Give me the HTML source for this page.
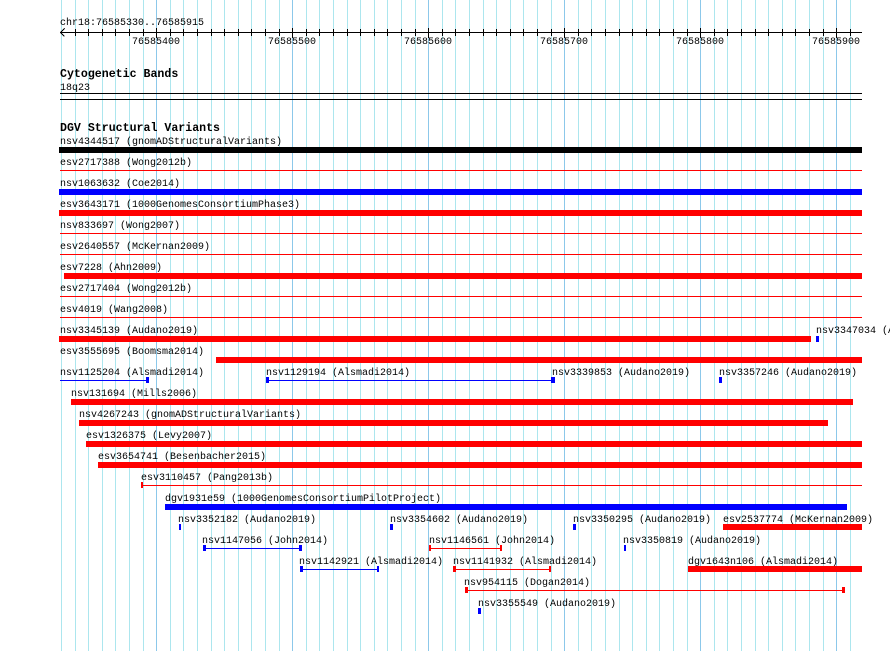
<!DOCTYPE html>
<html><head><meta charset="utf-8"><style>
html,body{margin:0;padding:0;background:#fff;width:890px;height:651px;overflow:hidden}
svg{display:block}
text{font-family:"Liberation Mono",monospace;font-size:10px;fill:#000}
.b{font-weight:bold;font-size:11.6px}
</style></head><body>
<svg width="890" height="651" viewBox="0 0 890 651" xmlns="http://www.w3.org/2000/svg" shape-rendering="crispEdges">
<g stroke="#ace6ee" stroke-width="1">
<path d="M61.5 0V651M75.5 0V651M88.5 0V651M102.5 0V651M115.5 0V651M129.5 0V651M143.5 0V651M170.5 0V651M183.5 0V651M197.5 0V651M211.5 0V651M224.5 0V651M238.5 0V651M251.5 0V651M265.5 0V651M279.5 0V651M306.5 0V651M319.5 0V651M333.5 0V651M347.5 0V651M360.5 0V651M374.5 0V651M387.5 0V651M401.5 0V651M415.5 0V651M442.5 0V651M455.5 0V651M469.5 0V651M483.5 0V651M496.5 0V651M510.5 0V651M523.5 0V651M537.5 0V651M551.5 0V651M578.5 0V651M591.5 0V651M605.5 0V651M619.5 0V651M632.5 0V651M646.5 0V651M659.5 0V651M673.5 0V651M687.5 0V651M714.5 0V651M727.5 0V651M741.5 0V651M755.5 0V651M768.5 0V651M782.5 0V651M795.5 0V651M809.5 0V651M823.5 0V651M850.5 0V651"/>
</g>
<g stroke="#8cc8ea" stroke-width="1">
<path d="M156.5 0V651M292.5 0V651M428.5 0V651M564.5 0V651M700.5 0V651M836.5 0V651"/>
</g>
<!-- ruler -->
<text x="60" y="25">chr18:76585330..76585915</text>
<g stroke="#000" stroke-width="1">
<path d="M60 32.5H862"/>
<path d="M60.5 32.5L64.5 28.5M60.5 32.5L64.5 36.5"/>
<path d="M75.5 29V36M88.5 29V36M102.5 29V36M115.5 29V36M129.5 29V36M143.5 29V36M170.5 29V36M183.5 29V36M197.5 29V36M211.5 29V36M224.5 29V36M238.5 29V36M251.5 29V36M265.5 29V36M279.5 29V36M306.5 29V36M319.5 29V36M333.5 29V36M347.5 29V36M360.5 29V36M374.5 29V36M387.5 29V36M401.5 29V36M415.5 29V36M442.5 29V36M455.5 29V36M469.5 29V36M483.5 29V36M496.5 29V36M510.5 29V36M523.5 29V36M537.5 29V36M551.5 29V36M578.5 29V36M591.5 29V36M605.5 29V36M619.5 29V36M632.5 29V36M646.5 29V36M659.5 29V36M673.5 29V36M687.5 29V36M714.5 29V36M727.5 29V36M741.5 29V36M755.5 29V36M768.5 29V36M782.5 29V36M795.5 29V36M809.5 29V36M823.5 29V36M850.5 29V36"/>
<path d="M156.5 28V38M292.5 28V38M428.5 28V38M564.5 28V38M700.5 28V38M836.5 28V38"/>
</g>
<g text-anchor="middle">
<text x="156" y="44">76585400</text><text x="292" y="44">76585500</text><text x="428" y="44">76585600</text><text x="564" y="44">76585700</text><text x="700" y="44">76585800</text><text x="836" y="44">76585900</text>
</g>
<!-- cytoband -->
<text class="b" x="60" y="77">Cytogenetic Bands</text>
<text x="60" y="90">18q23</text>
<rect x="60" y="93" width="802" height="1" fill="#000"/>
<rect x="60" y="99" width="802" height="1" fill="#000"/>
<!-- DGV -->
<text class="b" x="60" y="131">DGV Structural Variants</text>
<text x="60" y="144">nsv4344517 (gnomADStructuralVariants)</text>
<rect x="59" y="147" width="803" height="6" fill="#000"/>
<text x="60" y="165">esv2717388 (Wong2012b)</text>
<rect x="60" y="170" width="802" height="1" fill="#f00"/>
<text x="60" y="186">nsv1063632 (Coe2014)</text>
<rect x="59" y="189" width="803" height="6" fill="#00f"/>
<text x="60" y="207">esv3643171 (1000GenomesConsortiumPhase3)</text>
<rect x="59" y="210" width="803" height="6" fill="#f00"/>
<text x="60" y="228">nsv833697 (Wong2007)</text>
<rect x="60" y="233" width="802" height="1" fill="#f00"/>
<text x="60" y="249">esv2640557 (McKernan2009)</text>
<rect x="60" y="254" width="802" height="1" fill="#f00"/>
<text x="60" y="270">esv7228 (Ahn2009)</text>
<rect x="64" y="273" width="798" height="6" fill="#f00"/>
<text x="60" y="291">esv2717404 (Wong2012b)</text>
<rect x="60" y="296" width="802" height="1" fill="#f00"/>
<text x="60" y="312">esv4019 (Wang2008)</text>
<rect x="60" y="317" width="802" height="1" fill="#f00"/>
<text x="60" y="333">nsv3345139 (Audano2019)</text>
<rect x="59" y="336" width="752" height="6" fill="#f00"/>
<text x="816" y="333">nsv3347034 (Audano2019)</text>
<rect x="816" y="336" width="3" height="6" fill="#00f"/>
<text x="60" y="354">esv3555695 (Boomsma2014)</text>
<rect x="216" y="357" width="646" height="6" fill="#f00"/>
<text x="60" y="375">nsv1125204 (Alsmadi2014)</text>
<rect x="60" y="380" width="89" height="1" fill="#00f"/><rect x="146" y="377" width="3" height="6" fill="#00f"/>
<text x="266" y="375">nsv1129194 (Alsmadi2014)</text>
<rect x="266" y="380" width="287" height="1" fill="#00f"/><rect x="266" y="377" width="3" height="6" fill="#00f"/><rect x="551" y="377" width="2" height="6" fill="#00f"/>
<text x="552" y="375">nsv3339853 (Audano2019)</text>
<rect x="553" y="377" width="2" height="6" fill="#00f"/>
<text x="719" y="375">nsv3357246 (Audano2019)</text>
<rect x="719" y="377" width="3" height="6" fill="#00f"/>
<text x="71" y="396">nsv131694 (Mills2006)</text>
<rect x="71" y="399" width="782" height="6" fill="#f00"/>
<text x="79" y="417">nsv4267243 (gnomADStructuralVariants)</text>
<rect x="79" y="420" width="749" height="6" fill="#f00"/>
<text x="86" y="438">esv1326375 (Levy2007)</text>
<rect x="86" y="441" width="776" height="6" fill="#f00"/>
<text x="98" y="459">esv3654741 (Besenbacher2015)</text>
<rect x="98" y="462" width="764" height="6" fill="#f00"/>
<text x="141" y="480">esv3110457 (Pang2013b)</text>
<rect x="141" y="485" width="721" height="1" fill="#f00"/><rect x="141" y="482" width="2" height="6" fill="#f00"/>
<text x="165" y="501">dgv1931e59 (1000GenomesConsortiumPilotProject)</text>
<rect x="165" y="504" width="682" height="6" fill="#00f"/>
<text x="178" y="522">nsv3352182 (Audano2019)</text>
<rect x="179" y="524" width="2" height="6" fill="#00f"/>
<text x="390" y="522">nsv3354602 (Audano2019)</text>
<rect x="390" y="524" width="3" height="6" fill="#00f"/>
<text x="573" y="522">nsv3350295 (Audano2019)</text>
<rect x="573" y="524" width="3" height="6" fill="#00f"/>
<text x="723" y="522">esv2537774 (McKernan2009)</text>
<rect x="723" y="524" width="139" height="6" fill="#f00"/>
<text x="202" y="543">nsv1147056 (John2014)</text>
<rect x="203" y="548" width="99" height="1" fill="#00f"/><rect x="203" y="545" width="3" height="6" fill="#00f"/><rect x="299" y="545" width="3" height="6" fill="#00f"/>
<text x="429" y="543">nsv1146561 (John2014)</text>
<rect x="429" y="548" width="73" height="1" fill="#f00"/><rect x="429" y="545" width="2" height="6" fill="#f00"/><rect x="500" y="545" width="2" height="6" fill="#f00"/>
<text x="623" y="543">nsv3350819 (Audano2019)</text>
<rect x="624" y="545" width="2" height="6" fill="#00f"/>
<text x="299" y="564">nsv1142921 (Alsmadi2014)</text>
<rect x="300" y="569" width="78" height="1" fill="#00f"/><rect x="300" y="566" width="3" height="6" fill="#00f"/><rect x="377" y="566" width="2" height="6" fill="#00f"/>
<text x="453" y="564">nsv1141932 (Alsmadi2014)</text>
<rect x="453" y="569" width="98" height="1" fill="#f00"/><rect x="453" y="566" width="3" height="6" fill="#f00"/><rect x="549" y="566" width="2" height="6" fill="#f00"/>
<text x="688" y="564">dgv1643n106 (Alsmadi2014)</text>
<rect x="688" y="566" width="174" height="6" fill="#f00"/>
<text x="464" y="585">nsv954115 (Dogan2014)</text>
<rect x="465" y="590" width="380" height="1" fill="#f00"/><rect x="465" y="587" width="3" height="6" fill="#f00"/><rect x="842" y="587" width="3" height="6" fill="#f00"/>
<text x="478" y="606">nsv3355549 (Audano2019)</text>
<rect x="478" y="608" width="3" height="6" fill="#00f"/>
</svg>
</body></html>
